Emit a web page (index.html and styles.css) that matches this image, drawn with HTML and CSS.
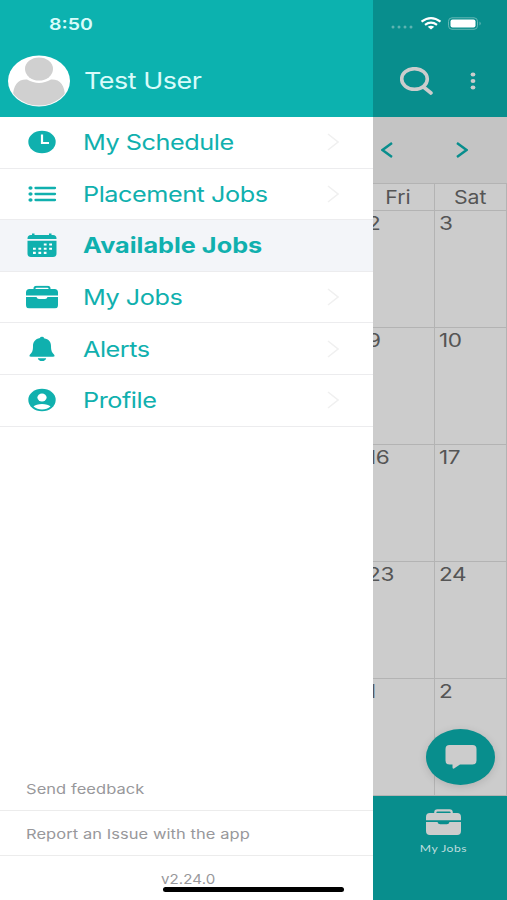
FILE: index.html
```html
<!DOCTYPE html>
<html lang="en">
<head>
<meta charset="utf-8">
<title>Available Jobs</title>
<link rel="stylesheet" href="styles.css">
</head>
<body>
<svg width="0" height="0" class="defs">
  <symbol id="case" viewBox="0 0 32 23" preserveAspectRatio="none">
    <path d="M8.500 5V3Q8.500 1.200 10.500 1.200h11Q23.500 1.200 23.500 3V5" fill="none" stroke="currentColor" stroke-width="2"/>
    <path d="M3.500 3.500h25Q32 3.500 32 7V10H0V7Q0 3.500 3.500 3.500zM0 11.500H10.500Q11 13.500 13 13.500h6q2 0 2.500-2H32V19.500Q32 23 28.500 23h-25Q0 23 0 19.500z" fill="currentColor"/>
  </symbol>
  <symbol id="next" viewBox="0 0 12 18"><path d="M1 1l10 8-10 8" fill="none" stroke="currentColor" stroke-width="1.600"/></symbol>
</svg>
<div class="app">
  <aside class="drawer">
    <header class="user">
      <div class="time"><span class="wide">8:50</span></div>
      <div class="account">
        <svg class="avatar" viewBox="0 0 62 52">
          <defs><clipPath id="face"><ellipse cx="31" cy="26" rx="30" ry="24.500"/></clipPath></defs>
          <ellipse cx="31" cy="26" rx="31" ry="25.500" fill="#fff"/>
          <g clip-path="url(#face)"><path d="M5 51V42C5 30 10 24 19 24.500C27 29 35 29 43 24.500C52 24 57 30 57 42V51z" fill="#d0d0d0"/></g>
          <ellipse cx="31" cy="14" rx="14" ry="11.500" fill="#d0d0d0"/>
        </svg>
        <span class="wide name">Test User</span>
      </div>
    </header>
    <nav class="menu">
      <a class="item">
        <svg class="icon" viewBox="0 0 32 26"><ellipse cx="16" cy="13" rx="13.700" ry="11.200" fill="currentColor"/><path d="M16 5.500v8.500h7" fill="none" stroke="#fff" stroke-width="2.200"/></svg>
        <span class="wide">My Schedule</span><svg class="chevron"><use href="#next"/></svg></a>
      <a class="item">
        <svg class="icon" viewBox="0 0 32 26"><path d="M9.500 7h19.500M9.500 13h19.500M9.500 19h19.500" stroke="currentColor" stroke-width="2.300" stroke-linecap="round"/><g fill="currentColor"><ellipse cx="4.500" cy="7" rx="2.100" ry="1.700"/><ellipse cx="4.500" cy="13" rx="2.100" ry="1.700"/><ellipse cx="4.500" cy="19" rx="2.100" ry="1.700"/></g></svg>
        <span class="wide">Placement Jobs</span><svg class="chevron"><use href="#next"/></svg></a>
      <a class="item active">
        <svg class="icon" viewBox="0 0 32 26"><path d="M1.500 6.500Q1.500 3 5 3H6V1.500h2.500V3h14.500V1.500H25.500V3h1.500Q30.500 3 30.500 6.500V7h-29zM1.500 8.700h29v12.800Q30.500 25 27 25H5Q1.500 25 1.500 21.500z" fill="currentColor"/><path d="M17.800 12.500H26M7 16.700H26.500M7 20.900H20.500" stroke="#fff" stroke-width="2.100" stroke-dasharray="2.800 2.600"/></svg>
        <span class="wide">Available Jobs</span></a>
      <a class="item">
        <svg class="icon"><use href="#case" y="1.500" width="32" height="23"/></svg>
        <span class="wide">My Jobs</span><svg class="chevron"><use href="#next"/></svg></a>
      <a class="item">
        <svg class="icon" viewBox="0 0 32 26"><path d="M14 2Q14 .8 16 .8T18 2.200C23 3 25 6 25 10C25 15 26 16.500 28 18.500Q29.500 20.700 27 20.700H5Q2.500 20.700 4 18.500C6 16.500 7 15 7 10C7 6 9 3 14 2zM11.800 22.200h8.400Q19.500 25 16 25t-4.200-2.800z" fill="currentColor"/></svg>
        <span class="wide">Alerts</span><svg class="chevron"><use href="#next"/></svg></a>
      <a class="item">
        <svg class="icon" viewBox="0 0 32 26"><ellipse cx="16" cy="13" rx="13.700" ry="11.200" fill="currentColor"/><ellipse cx="16" cy="10.500" rx="4.600" ry="4" fill="#fff"/><path d="M7.500 19.500C10 16 22 16 24.500 19.500Q21 22.500 16 22.500T7.500 19.500z" fill="#fff"/></svg>
        <span class="wide">Profile</span><svg class="chevron"><use href="#next"/></svg></a>
    </nav>
    <footer class="links">
      <a class="link"><span class="wide">Send feedback</span></a>
      <a class="link"><span class="wide">Report an Issue with the app</span></a>
      <div class="version"><span class="wide">v2.24.0</span></div>
    </footer>
  </aside>
  <main class="page">
    <header class="topbar">
      <svg class="status" viewBox="0 0 92 14">
        <g fill="#5eb3b1"><circle cx="3" cy="11" r="1.500"/><circle cx="9" cy="11" r="1.500"/><circle cx="15" cy="11" r="1.500"/><circle cx="21" cy="11" r="1.500"/></g>
        <g fill="none" stroke="#fff" stroke-width="2.200"><path d="M31.500 5.700Q41-1.500 50.500 5.700M35 8.800Q41 4.300 47 8.800"/></g><path d="M37.700 10.700Q41 8.700 44.300 10.700L41 13.500z" fill="#fff"/>
        <rect x="58.500" y="1.800" width="29" height="11.500" rx="3.500" fill="none" stroke="#64b8b6"/><rect x="60.500" y="3.600" width="25" height="8" rx="2" fill="#fff"/><path d="M89.500 5.500q2.500 2 0 4z" fill="#64b8b6"/>
      </svg>
      <div class="tools">
        <svg class="search" viewBox="0 0 34 28"><ellipse cx="14.500" cy="12" rx="12.800" ry="10.300"/><path d="M23.500 20l7.500 6"/></svg>
        <svg class="more" viewBox="0 0 6 18"><ellipse cx="3" cy="2.500" rx="2.400" ry="2"/><ellipse cx="3" cy="9" rx="2.400" ry="2"/><ellipse cx="3" cy="15.500" rx="2.400" ry="2"/></svg>
      </div>
    </header>
    <div class="pager">
      <svg viewBox="0 0 12 16"><path d="M11 1L1.500 8l9.500 7"/></svg>
      <svg viewBox="0 0 12 16"><path d="M1 1l9.500 7L1 15"/></svg>
    </div>
    <section class="calendar">
      <div class="day"><span class="wide">Fri</span></div><div class="day"><span class="wide">Sat</span></div>
      <div class="cell"><span class="wide">2</span></div><div class="cell"><span class="wide">3</span></div>
      <div class="cell"><span class="wide">9</span></div><div class="cell"><span class="wide">10</span></div>
      <div class="cell"><span class="wide">16</span></div><div class="cell"><span class="wide">17</span></div>
      <div class="cell"><span class="wide">23</span></div><div class="cell"><span class="wide">24</span></div>
      <div class="cell"><span class="wide">1</span></div><div class="cell"><span class="wide">2</span></div>
    </section>
    <footer class="tabs">
      <svg class="tab-icon"><use href="#case" width="35" height="26"/></svg>
      <span class="wide">My Jobs</span>
    </footer>
    <button class="chat" aria-label="Chat"><svg viewBox="0 0 32 24"><path d="M4.500 0h23q4 0 4 4v11.500q0 4-4 4H15L9 23.500Q7.500 24 7.500 22.500V19.500H4.500Q.5 19.500 .5 15.500V4Q.5 0 4.500 0z" fill="#ccc"/></svg></button>
  </main>
  <div class="home"></div>
</div>
</body>
</html>
```
FILE: styles.css
```css
* { box-sizing: border-box; }
body { margin: 0; font-family: Inter, "Liberation Sans", sans-serif; }
svg { display: block; flex: none; }
.defs { position: absolute; }
.app { position: relative; display: grid; grid-template-columns: 372.5px 1fr; width: 507px; height: 900px; overflow: hidden; }
.wide { display: inline-block; white-space: nowrap; transform: scaleX(1.22); transform-origin: left center; }

.drawer { display: flex; flex-direction: column; background: #fff; color: #10b0ae; min-width: 0; }
.user { height: 117px; background: #0cb2af; color: #d9fbfa; padding-top: 14px; }
.time { height: 20px; padding-left: 49px; font-size: 16px; line-height: 20px; font-weight: 600; }
.account { display: flex; align-items: center; margin-top: 21px; padding-left: 8px; gap: 14px; }
.avatar { width: 62px; height: 52px; }
.name { font-size: 23px; line-height: 30px; letter-spacing: -.4px; transform: scaleX(1.17); }
.menu { display: grid; grid-auto-rows: 51.6px; }
.item { display: flex; align-items: center; padding: 0 34px 0 26px; border-bottom: 1px solid #ececee; font-size: 21.5px; letter-spacing: -.4px; }
.item .wide { margin-left: 25px; transform: scaleX(1.175); }
.active { background: #f3f5f9; font-weight: 700; letter-spacing: 0; }
.icon { width: 32px; height: 26px; }
.chevron { width: 12px; height: 18px; margin-left: auto; color: #f0f0f0; }
.links { margin-top: auto; color: #98989b; font-size: 13.5px; letter-spacing: .06px; }
.link { display: flex; align-items: center; height: 44.5px; padding: 2px 0 0 25.5px; border-bottom: 1px solid #ececec; }
.version { height: 44.5px; padding: 14px 0 0 161px; line-height: 18px; }
.version .wide { transform: scaleX(1.12); }

.page { position: relative; overflow: hidden; background: #ccc; }
.topbar { height: 117px; background: #088e8d; padding: 16px 0 0 17px; }
.status { width: 92px; height: 14px; }
.tools { display: flex; align-items: center; padding: 37px 0 0 10px; gap: 36px; }
.search { width: 34px; height: 28px; fill: none; stroke: #ccc; stroke-width: 3.6; stroke-linecap: round; }
.more { width: 6px; height: 18px; fill: #ccc; }
.pager { display: flex; align-items: center; gap: 63px; height: 66px; padding-left: 8.5px; background: #c4c4c4; }
.pager svg { width: 12px; height: 16px; fill: none; stroke: #088e8d; stroke-width: 2.4; }
.calendar { display: grid; grid-template-columns: 72.5px 72px; grid-template-rows: 27px; grid-auto-rows: 117px; margin-left: -10.5px; height: 612px; border-top: 1px solid #b3b3b3; color: #555; font-size: 18.5px; }
.day, .cell { border-right: 1px solid #b3b3b3; border-bottom: 1px solid #b3b3b3; }
.day { text-align: center; line-height: 26px; }
.day .wide { transform-origin: center; transform: scaleX(1.15); }
.cell { padding: 1px 0 0 4.5px; line-height: 23px; letter-spacing: -.3px; }
.tabs { display: flex; flex-direction: column; align-items: center; height: 105px; padding: 14px 0 0 7px; background: #088e8d; color: #bddddd; font-family: Lato, sans-serif; font-size: 10px; gap: 6px; }
.tabs .wide { transform-origin: center; letter-spacing: .4px; line-height: 14px; }
.tab-icon { width: 35px; height: 26px; color: #ccc; }
.chat { position: absolute; left: 53.5px; top: 729px; width: 69px; height: 56px; border: 0; border-radius: 50%; padding: 0; display: grid; place-items: center; background: #088e8d; box-shadow: 0 2px 9px #0002; }
.chat svg { width: 32px; height: 24px; }
.home { position: absolute; left: 163px; top: 887px; width: 181px; height: 5px; border-radius: 3px; background: #000; }
```
